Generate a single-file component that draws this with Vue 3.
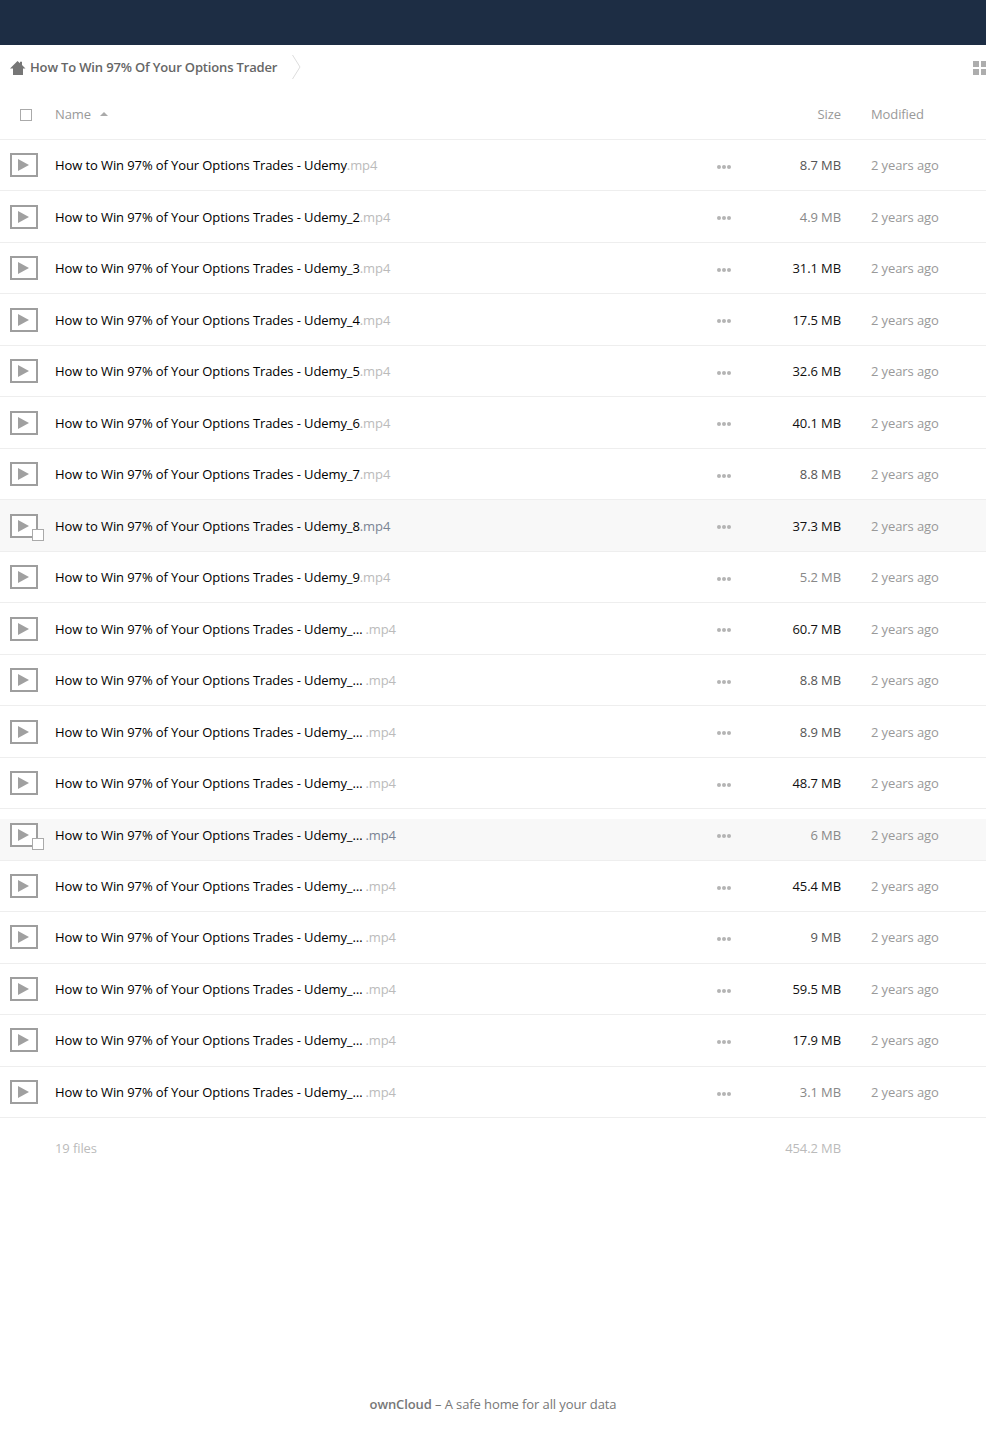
<script setup>
const rows = [
  ['', '8.7 MB', 'c1'], ['_2', '4.9 MB', 'c2'], ['_3', '31.1 MB', 'c0'], ['_4', '17.5 MB', 'c0'],
  ['_5', '32.6 MB', 'c0'], ['_6', '40.1 MB', 'c0'], ['_7', '8.8 MB', 'c1'], ['_8', '37.3 MB', 'c0', 'hover'],
  ['_9', '5.2 MB', 'c2'], ['_…', '60.7 MB', 'c0'], ['_…', '8.8 MB', 'c1'], ['_…', '8.9 MB', 'c1'],
  ['_…', '48.7 MB', 'c0'], ['_…', '6 MB', 'c2', 'hover part'], ['_…', '45.4 MB', 'c0'], ['_…', '9 MB', 'c1', 'nudge'],
  ['_…', '59.5 MB', 'c0'], ['_…', '17.9 MB', 'c0', 'nudge'], ['_…', '3.1 MB', 'c2']
]
</script>

<template>
  <div class="page">
    <header class="topbar"></header>
    <nav class="crumbs">
      <svg class="home" width="16" height="16" viewBox="0 0 16 16"><path d="M7.5 1 L10 3.2 V1.8 H12 V5 L15.5 8.6 H13 V15 H3 V8.6 H0 Z" fill="#767676"/></svg>
      <span class="crumb-text">How To Win 97% Of Your Options Trader</span>
      <svg class="chev" width="9" height="24" viewBox="0 0 9 24"><path d="M.5 0 L8 12 L.5 24" fill="none" stroke="#dddddd" stroke-width="1"/></svg>
      <span class="grid-icon"><i></i><i></i><i></i><i></i></span>
    </nav>
    <div class="head">
      <span class="check"></span>
      <span class="name-head">Name</span>
      <span class="sort"></span>
      <span class="size-head">Size</span>
      <span class="mod-head">Modified</span>
    </div>
    <div v-for="(r, i) in rows" :key="i" class="row" :class="r[3]">
      <span class="thumb">
        <svg width="28" height="24" viewBox="0 0 28 24"><rect x="1" y="1" width="26" height="22" fill="#fff" stroke="#9e9e9e" stroke-width="2"/><path d="M8 6 L19 12 L8 18 Z" fill="#a0a0a0"/></svg>
        <span v-if="r[3] && r[3] !== 'nudge'" class="row-check"></span>
      </span>
      <span class="fname">How to Win 97% of Your Options Trades - Udemy{{ r[0] }}<span class="ext" :class="{ gap: r[0] === '_…' }">.mp4</span></span>
      <span class="dots"><i></i><i></i><i></i></span>
      <span class="size" :class="r[2]">{{ r[1] }}</span>
      <span class="mod">2 years ago</span>
    </div>
    <div class="summary">
      <span class="files">19 files</span>
      <span class="total">454.2 MB</span>
    </div>
    <footer class="foot"><b>ownCloud</b> – A safe home for all your data</footer>
  </div>
</template>

<style>
html, body { margin: 0; background: #fff; }
</style>

<style scoped>
.page {
  width: 986px;
  height: 1435px;
  overflow: hidden;
  display: flex;
  flex-direction: column;
  font: 13px/18px "Open Sans", sans-serif;
  letter-spacing: -0.1px;
  color: #555;
}
.topbar { height: 45px; background: #1d2d44; flex: none; }
.crumbs {
  height: 44px;
  flex: none;
  display: flex;
  align-items: center;
  padding-left: 10px;
  position: relative;
}
.home { flex: none; margin-top: 1px; }
.crumb-text { margin-left: 4px; font-weight: 600; color: #666; letter-spacing: -0.16px; }
.chev { margin-left: 15px; flex: none; }
.grid-icon {
  margin-left: auto;
  width: 14px;
  height: 14px;
  margin-right: -1px;
  margin-top: 2px;
  display: grid;
  grid-template-columns: 6px 6px;
  grid-template-rows: 6px 6px;
  gap: 2px;
  flex: none;
}
.grid-icon i { background: #adadad; }
.head {
  height: 50.5px;
  flex: none;
  box-sizing: border-box;
  border-bottom: 1px solid #eee;
  display: flex;
  align-items: center;
  color: #999;
}
.check {
  width: 10px;
  height: 10px;
  border: 1px solid #aaa;
  margin-left: 20px;
  flex: none;
  margin-top: 2px;
}
.name-head { margin-left: 23px; }
.sort {
  width: 0;
  height: 0;
  border: 4px solid transparent;
  border-top: 0;
  border-bottom: 4px solid #aaa;
  margin-left: 9px;
}
.size-head { margin-left: auto; width: 60px; text-align: right; }
.mod-head { width: 115px; margin-left: 30px; }
.row {
  height: 51.5px;
  flex: none;
  box-sizing: border-box;
  border-bottom: 1px solid #eee;
  padding-top: 0.5px;
  display: flex;
  align-items: center;
  color: #000;
}
.row.hover { background: #f8f8f8; }
.row.part { background: linear-gradient(#fff 10px, #f8f8f8 10px); }
.thumb {
  position: relative;
  width: 28px;
  height: 24px;
  margin-left: 10px;
  flex: none;
}
.thumb svg { display: block; }
.row-check {
  position: absolute;
  left: 22px;
  top: 15px;
  width: 10px;
  height: 10px;
  border: 1px solid #aaa;
  background: #fff;
}
.fname { margin-left: 17px; white-space: nowrap; }
.ext { color: #bbb; }
.ext.gap { margin-left: 3px; }
.hover .ext { color: #7a8494; }
.dots {
  margin-left: auto;
  display: flex;
  gap: 1px;
  flex: none;
  margin-top: 3px;
}
.dots i { width: 4px; height: 4px; border-radius: 50%; background: #b4b4b4; }
.size { width: 60px; margin-left: 50px; text-align: right; flex: none; }
.c0 { color: #111; }
.c1 { color: #555; }
.c2 { color: #888; }
.mod { width: 115px; margin-left: 30px; color: #999; flex: none; }
.nudge .thumb, .nudge .fname, .nudge .size, .nudge .mod { margin-bottom: 1px; }
.summary {
  height: 60px;
  flex: none;
  display: flex;
  align-items: center;
  color: #bbb;
}
.files { margin-left: 55px; }
.total { margin-left: auto; margin-right: 145px; }
.foot {
  margin-top: auto;
  margin-bottom: 22px;
  text-align: center;
  color: #777;
}
.foot b { font-weight: 600; }
</style>
